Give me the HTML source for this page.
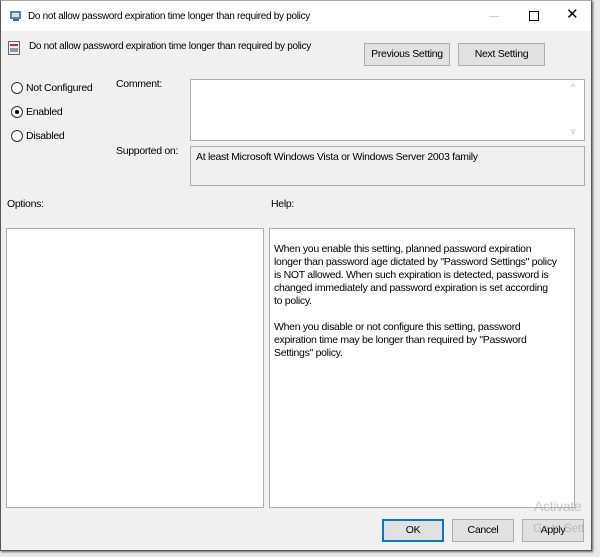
<!DOCTYPE html>
<html><head><style>
*{margin:0;padding:0;box-sizing:border-box}
body{width:600px;height:557px;background:#e9e9e9;font-family:"Liberation Sans",sans-serif;font-size:10px;letter-spacing:-0.3px;color:#000;position:relative;overflow:hidden}
.win{position:absolute;left:0;top:0;width:592px;height:551px;background:#f0f0f0;border:1px solid #555;border-top:1px solid #aaa;box-shadow:1px 1px 2px #666}
.a{position:absolute;white-space:nowrap}
.tb{position:absolute;left:0;top:0;width:590px;height:30px;background:#fff}
.box{position:absolute;background:#fff;border:1px solid #adadad}
.gbox{position:absolute;background:#f0f0f0;border:1px solid #adadad}
.btn{position:absolute;background:#e1e1e1;border:1px solid #adadad;text-align:center;line-height:21px;font-size:10.5px}
.rad{position:absolute;width:12px;height:12px;border:1px solid #333;border-radius:50%;background:#fff}
.sa{position:absolute;color:#bbb;font-size:9px}
</style></head><body>
<div class="win">
<div class="tb">
<svg class="a" style="left:8px;top:8px" width="14" height="13"><rect x="1" y="2" width="11" height="8" fill="#5b7fa8"/><rect x="3" y="4" width="7" height="4" fill="#cfe0f0"/><rect x="4" y="10" width="6" height="2" fill="#666"/></svg>
<div class="a" style="left:27px;top:10px">Do not allow password expiration time longer than required by policy</div>
<div class="a" style="left:488px;top:15px;width:10px;height:1px;background:#ccc"></div>
<div class="a" style="left:528px;top:10px;width:10px;height:10px;border:1px solid #000"></div>
<div class="a" style="left:565px;top:4px;font-size:15px">✕</div>
</div>
<svg class="a" style="left:7px;top:40px" width="13" height="15"><rect x="0.5" y="0.5" width="11" height="13" fill="#eee" stroke="#666"/><rect x="2" y="3" width="8" height="2" fill="#a33"/><rect x="2" y="7" width="8" height="4" fill="#89a"/></svg>
<div class="a" style="left:28px;top:40px">Do not allow password expiration time longer than required by policy</div>
<div class="btn" style="left:363px;top:42px;width:86px;height:23px">Previous Setting</div>
<div class="btn" style="left:457px;top:42px;width:87px;height:23px">Next Setting</div>
<div class="rad" style="left:10px;top:81px"></div><div class="a" style="left:25px;top:81px;font-size:10.5px">Not Configured</div>
<div class="rad" style="left:10px;top:105px"><div style="position:absolute;left:3px;top:3px;width:4px;height:4px;border-radius:50%;background:#000"></div></div><div class="a" style="left:25px;top:105px;font-size:10.5px">Enabled</div>
<div class="rad" style="left:10px;top:129px"></div><div class="a" style="left:25px;top:129px;font-size:10.5px">Disabled</div>
<div class="a" style="left:115px;top:77px;font-size:10.5px">Comment:</div>
<div class="box" style="left:189px;top:78px;width:395px;height:62px"><span class="sa" style="left:380px;top:2px">^</span><span class="sa" style="left:380px;top:46px">v</span></div>
<div class="a" style="left:115px;top:144px;font-size:10.5px">Supported on:</div>
<div class="gbox" style="left:189px;top:145px;width:395px;height:40px"><span class="a" style="left:5px;top:4px;font-size:10.5px">At least Microsoft Windows Vista or Windows Server 2003 family</span></div>
<div class="a" style="left:6px;top:197px;font-size:10.5px">Options:</div>
<div class="a" style="left:270px;top:197px;font-size:10.5px">Help:</div>
<div class="box" style="left:5px;top:227px;width:258px;height:280px"></div>
<div class="box" style="left:268px;top:227px;width:306px;height:280px"><div class="a" style="left:4px;top:14px;line-height:13px;font-size:10.5px">When you enable this setting, planned password expiration<br>longer than password age dictated by "Password Settings" policy<br>is NOT allowed. When such expiration is detected, password is<br>changed immediately and password expiration is set according<br>to policy.<br><br>When you disable or not configure this setting, password<br>expiration time may be longer than required by "Password<br>Settings" policy.</div></div>
<div class="btn" style="left:381px;top:518px;width:62px;height:23px;border:2px solid #0078d7;line-height:19px">OK</div>
<div class="btn" style="left:451px;top:518px;width:62px;height:23px">Cancel</div>
<div class="btn" style="left:521px;top:518px;width:62px;height:23px">Apply</div>
<div class="a" style="left:533px;top:497px;font-size:14px;color:rgba(150,150,150,.5)">Activate</div>
<div class="a" style="left:532px;top:520px;font-size:12px;color:rgba(150,150,150,.5)">Go to Sett</div>
</div>
</body></html>
